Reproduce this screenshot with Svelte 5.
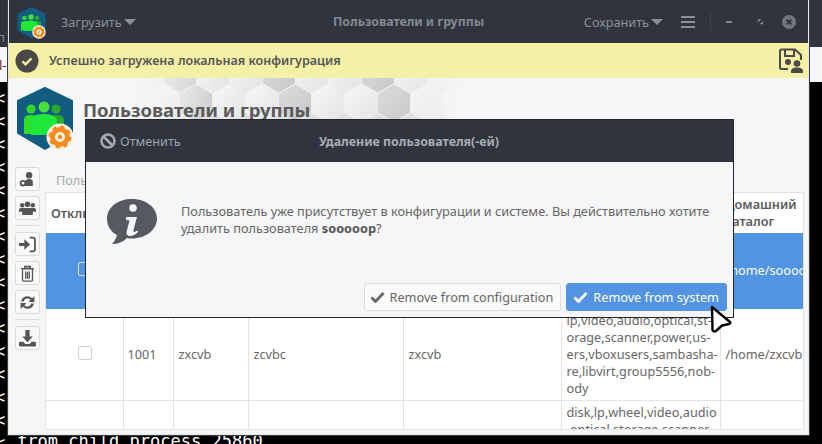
<script>
  const rows = [
    { uid: '1000', login: 'soooooр', name: 'soooooр', shell: 'soooooр', groups: '', home: '/home/sooooooр', cls: 'sel' },
    { uid: '1001', login: 'zxcvb', name: 'zcvbc', shell: 'zxcvb', groups: ['lp,video,audio,optical,st-','orage,scanner,power,us-','ers,vboxusers,sambasha-','re,libvirt,group5556,nob-','ody'], home: '/home/zxcvb', cls: '' },
    { uid: '', login: '', name: '', shell: '', groups: ['disk,lp,wheel,video,audio',',optical,storage,scanner'], home: '', cls: 'last' }
  ];
  const lines = Array.from({ length: 16 });
  const hexes = [];
  for (let i = 0; i < 11; i++) {
    hexes.push({ x: 148 + i * 33 - 131, y: -4, f: i % 3 === 1 ? 'hxd' : 'hx' });
    hexes.push({ x: 131 + i * 33 - 131, y: 25, f: i % 3 === 2 ? 'hxd' : 'hx' });
  }
</script>

{#snippet logo()}
  <svg class="logo" viewBox="0 0 58 64">
    <path d="M29 1 L56 14 V46 L29 62 L2 46 V14 Z" fill="#125c82" stroke="#125c82" stroke-width="2" stroke-linejoin="round"/>
    <circle cx="15" cy="22" r="4.600" fill="#35d52e"/>
    <circle cx="40" cy="22" r="4.600" fill="#2aa92e"/>
    <path d="M8 47 V33 Q8 28 15 28 Q22 28 22 33 V47 Z" fill="#2fe02a"/>
    <path d="M34 47 V33 Q34 28 41 28 Q48 28 48 33 V47 Z" fill="#2aa92e"/>
    <circle cx="28" cy="20" r="5.500" fill="#45e03a"/>
    <path d="M15 48 V35 Q15 27 28 27 Q41 27 41 35 V48 Z" fill="#1fe83a"/>
    <circle cx="44" cy="50" r="13.500" fill="#fdf3e4"/>
    <circle cx="44" cy="50" r="7.500" fill="none" stroke="#f58a1f" stroke-width="5"/>
    <circle cx="44" cy="50" r="9.800" fill="none" stroke="#f58a1f" stroke-width="3.400" stroke-dasharray="3.850 3.850"/>
    <circle cx="44" cy="50" r="2.200" fill="#f58a1f"/>
  </svg>
{/snippet}

<div class="desktop">
  <div class="term">
    {#each lines as _}<div>&lt;</div>{/each}
  </div>
  <div class="termlast">from child process 25860</div>
  <div class="backwin left"><span class="bt">п</span><span class="bw">l-</span></div>
  <div class="backwin right"></div>

  <div class="window">
    <header class="titlebar">
      <div class="tlogo">{@render logo()}</div>
      <span class="menu load">Загрузить<i class="caret"></i></span>
      <strong class="wtitle">Пользователи и группы</strong>
      <span class="menu save">Сохранить<i class="caret"></i></span>
      <span class="burger"><i></i><i></i><i></i></span>
      <span class="vsep"></span>
      <span class="min"></span>
      <svg class="rest" viewBox="0 0 8 8"><path d="M1 1h4L1 5zM7 7H3l4-4z" fill="#7f838c"/></svg>
      <svg class="close" viewBox="0 0 14 14"><circle cx="7" cy="7" r="7" fill="#71757e"/><path d="M4.600 4.600l4.800 4.800M9.400 4.600l-4.800 4.800" stroke="#2f343f" stroke-width="2"/></svg>
    </header>

    <div class="notice">
      <svg class="okic" viewBox="0 0 24 24"><circle cx="12" cy="12" r="11.500" fill="#4a4947"/><path d="M7.500 12.300l3 3 6-6" fill="none" stroke="#f4f1a6" stroke-width="2.400"/></svg>
      <b>Успешно загружена локальная конфигурация</b>
      <svg class="saveic" viewBox="0 0 26 26">
        <path d="M2 9V3a1.500 1.500 0 0 1 1.500-1.500H17L23 7v5M10 21H3.500A1.500 1.500 0 0 1 2 19.500V9" fill="none" stroke="#4a4a4a" stroke-width="2"/>
        <path d="M7 2v6h9V2" fill="none" stroke="#4a4a4a" stroke-width="2"/>
        <circle cx="10" cy="14" r="3" fill="#4a4a4a"/>
        <circle cx="19" cy="15.500" r="3.300" fill="#4a4a4a"/>
        <path d="M13 25v-2q0-3.500 6-3.500t6 3.500v2z" fill="#4a4a4a"/>
      </svg>
    </div>

    <main class="page">
      <svg class="hexbg" viewBox="0 0 340 44" width="340" height="44">
        <defs>
          <linearGradient id="fade" x1="0" x2="1">
            <stop offset="0" stop-color="#f5f6f7"/><stop offset=".1" stop-color="#f5f6f7" stop-opacity=".6"/>
            <stop offset=".26" stop-color="#f5f6f7" stop-opacity="0"/><stop offset=".82" stop-color="#f5f6f7" stop-opacity="0"/>
            <stop offset=".95" stop-color="#f5f6f7" stop-opacity=".8"/><stop offset=".98" stop-color="#f5f6f7"/>
          </linearGradient>
          <linearGradient id="hx" x1="0" y1="0" x2="1" y2="1"><stop offset="0" stop-color="#f8f8f8"/><stop offset="1" stop-color="#e2e2e2"/></linearGradient>
          <linearGradient id="hxd" x1="0" y1="0" x2="1" y2="1"><stop offset="0" stop-color="#dcdcdc"/><stop offset="1" stop-color="#c8c8c8"/></linearGradient>
        </defs>
        <rect width="340" height="44" fill="#e0e0e0"/>
        {#each hexes as h}
          <path transform={`translate(${h.x} ${h.y})`} d="M0 -19 L16.500 -9.500 V9.500 L0 19 L-16.500 9.500 V-9.500 Z" fill={`url(#${h.f})`} stroke="#efefef" stroke-width="1"/>
        {/each}
        <rect width="340" height="44" fill="url(#fade)"/>
      </svg>
      <div class="hero">
        <div class="hlogo">{@render logo()}</div>
        <h1>Пользователи и группы</h1>
      </div>
      <div class="body">
        <nav class="tools">
          <button aria-label="a"><svg viewBox="0 0 16 16"><circle cx="9.500" cy="4" r="3" fill="#555"/><path d="M6 14V10q0-2.500 3.500-2.500T13 10v4z" fill="#555"/><circle cx="3.800" cy="11.500" r="2.200" fill="none" stroke="#555" stroke-width="1.800"/></svg></button>
          <button aria-label="b"><svg viewBox="0 0 16 16"><circle cx="3" cy="5" r="2.100" fill="#555"/><circle cx="13" cy="5" r="2.100" fill="#555"/><circle cx="8" cy="4" r="2.600" fill="#555"/><path d="M0 11V9q0-1.500 2-1.500h12q2 0 2 1.500v2zM3 14v-4q0-2 2-2h6q2 0 2 2v4z" fill="#555"/></svg></button>
          <hr />
          <button aria-label="c"><svg viewBox="0 0 16 16"><path d="M0 6.500h5V3l5.500 5L5 13V9.500H0z" fill="#555"/><path d="M10 1.500h3a2 2 0 0 1 2 2v9a2 2 0 0 1-2 2h-3" fill="none" stroke="#555" stroke-width="1.700"/></svg></button>
          <button aria-label="d"><svg viewBox="0 0 16 16"><path d="M2 3.500h12M5.500 3V1.500h5V3" fill="none" stroke="#555" stroke-width="1.500"/><path d="M3.300 4v10a1.200 1.200 0 0 0 1.200 1.200h7A1.200 1.200 0 0 0 12.700 14V4M6.300 6v7M8 6v7M9.700 6v7" fill="none" stroke="#555" stroke-width="1.200"/></svg></button>
          <button aria-label="e"><svg viewBox="0 0 16 16"><path d="M2 7a6 6 0 0 1 10.300-3L14.500 2v5.500H9l2-2a4 4 0 0 0-6.700 1.500zM14 9a6 6 0 0 1-10.300 3L1.500 14V8.500H7l-2 2a4 4 0 0 0 6.700-1.500z" fill="#555"/></svg></button>
          <hr />
          <button aria-label="f"><svg viewBox="0 0 16 16"><path d="M6 0h4v6h3L8 11.500 3 6h3z" fill="#555"/><path d="M1 11h3l2 2.200h4L12 11h3q1 0 1 1v2.500q0 1-1 1H1q-1 0-1-1V12q0-1 1-1z" fill="#555"/></svg></button>
        </nav>
        <section class="content">
          <div class="tab">Пользователи</div>
          <div class="tablewrap">
            <table>
              <colgroup><col style="width:77px"/><col style="width:50px"/><col style="width:75px"/><col style="width:155px"/><col style="width:158px"/><col style="width:159px"/><col style="width:84px"/></colgroup>
              <thead>
                <tr><th>Отключить</th><th>UID</th><th>Логин</th><th>Имя</th><th>Группа</th><th>Группы</th><th>Домашний каталог</th></tr>
              </thead>
              <tbody>
                {#each rows as r}
                  <tr class={r.cls}>
                    <td class="chk">{#if r.cls !== 'last'}<span class="box"></span>{/if}</td>
                    <td>{r.uid}</td><td>{r.login}</td><td>{r.name}</td><td>{r.shell}</td>
                    <td class="grp">{#if r.groups}{#each r.groups as g}<div>{g}</div>{/each}{/if}</td>
                    <td class="home">{r.home}</td>
                  </tr>
                {/each}
              </tbody>
            </table>
          </div>
        </section>
      </div>
    </main>
  </div>

  <div class="dialog">
    <div class="dhead">
      <span class="cancel">
        <svg viewBox="0 0 16 16"><circle cx="8" cy="8" r="6.500" fill="none" stroke="#a5a8ae" stroke-width="2.600"/><path d="M3.500 3.500l9 9" stroke="#a5a8ae" stroke-width="2.600"/></svg>
        Отменить
      </span>
      <strong>Удаление пользователя(-ей)</strong>
    </div>
    <div class="dbody">
      <svg class="info" viewBox="0 0 50 46">
        <path d="M25 0C11 0 0 8 0 20c0 7 4 13 10 16-1 4-3 7-5 9 6 0 11-2 15-6 2 .5 3 .6 5 .6 14 0 25-9 25-20S39 0 25 0z" fill="#565a60"/>
        <circle cx="26" cy="9" r="3.800" fill="#f5f6f7"/>
        <path d="M19 18h11l-3.500 13q-.5 2 1 2l3-1.500.5 1.500q-4 4-8 4t-3.500-4l3-11.500-3.500-.5z" fill="#f5f6f7"/>
      </svg>
      <p>Пользователь уже присутствует в конфигурации и системе. Вы действительно хотите удалить пользователя <b>soooooр</b>?</p>
    </div>
    <div class="dfoot">
      <button class="btn"><svg viewBox="0 0 14 12"><path d="M1 6.500l4 4L13 2" fill="none" stroke="currentColor" stroke-width="2.800"/></svg>Remove from configuration</button>
      <button class="btn primary"><svg viewBox="0 0 14 12"><path d="M1 6.500l4 4L13 2" fill="none" stroke="currentColor" stroke-width="2.800"/></svg>Remove from system</button>
    </div>
  </div>

  <svg class="cursor" viewBox="0 0 24 28" width="24" height="28">
    <path d="M3 2 L21 17 Q22 18.500 20 19 L13 20.500 L7 26 Q4 27 3.500 25 Z" fill="#fff" stroke="#000" stroke-width="2.400" stroke-linejoin="round"/>
  </svg>
</div>

<style>
  :global(body) { margin: 0; background: #000; }
  .desktop {
    position: relative; width: 822px; height: 444px; overflow: hidden; background: #000;
    font-family: "Noto Sans", "Open Sans", sans-serif; color: #5c616c;
  }
  .term { position: absolute; left: -5px; top: 87px; font: 17px/23px "DejaVu Sans Mono", monospace; color: #fff; }
  .termlast { position: absolute; left: 17px; top: 431px; font: 17px/20px "DejaVu Sans Mono", monospace; color: #fff; }
  .backwin { position: absolute; top: 0; height: 82px; width: 12px; overflow: hidden;
    background: linear-gradient(#2f343f 0 47px, #f5f6f7 47px 82px); }
  .backwin.left { left: 0; width: 8px; }
  .backwin.right { right: 0; }
  .bt { position: absolute; left: -3px; top: 28px; font-size: 13px; color: #888; }
  .bw { position: absolute; left: -1px; top: 56px; font-size: 13px; color: #7d1a3a; }

  .window {
    position: absolute; left: 7px; top: -1px; width: 803px; height: 437px; box-sizing: border-box;
    border: 1px solid #3a3d44; outline: 1px solid #e6e7e9; outline-offset: -2px;
    padding: 1px; display: flex; flex-direction: column; background: #f5f6f7;
  }
  .titlebar {
    height: 43px; flex: none; background: #2f343f; display: flex; align-items: center; position: relative;
    margin-top: -1px; color: #8b8f97;
  }
  .tlogo { width: 29px; height: 32px; margin-left: 8px; margin-top: 2px; }
  .hlogo { width: 58px; height: 64px; margin: 9px 0 0 7px; }
  .logo { display: block; width: 100%; height: 100%; }
  .menu { font-size: 12.700px; display: inline-flex; align-items: center; }
  .load { margin-left: 15px; }
  .caret { display: inline-block; margin-left: 2px; border: 6px solid transparent; border-top: 6px solid #8b8f97; border-bottom: 0; border-left-width: 6.500px; border-right-width: 6.500px; }
  .wtitle { position: absolute; left: 324px; font-size: 12.300px; font-weight: 700; color: #85898f; }
  .save { margin-left: auto; }
  .burger { margin-left: 18px; width: 14px; display: flex; flex-direction: column; gap: 3px; }
  .burger i { height: 2px; background: #8b8f97; display: block; }
  .vsep { width: 1px; height: 18px; background: #3f4450; margin-left: 15px; }
  .min { width: 6px; height: 2px; background: #7f838c; margin-left: 15px; }
  .rest { width: 7px; height: 7px; margin-left: 25px; }
  .close { width: 14px; height: 14px; margin-left: 18px; margin-right: 12px; }

  .notice {
    height: 35px; flex: none; background: #f4f1a6; display: flex; align-items: center; padding-left: 6px;
    font-size: 12.550px; color: #555;
  }
  .notice b { margin-left: 10px; font-weight: 600; }
  .okic { width: 24px; height: 24px; }
  .saveic { width: 26px; height: 26px; margin-left: auto; margin-right: 4px; }

  .page { flex: 1; min-height: 0; position: relative; overflow: hidden; }
  .hexbg { position: absolute; left: 121px; top: 0; }
  .hero { position: relative; height: 89px; display: flex; }
  .hero h1 { margin: 19px 0 0 9px; font-size: 18.500px; line-height: 26px; font-weight: 700; color: #5a5a5a; }
  .body { display: flex; height: 268px; }
  .tools { width: 25px; margin-left: 6px; display: flex; flex-direction: column; gap: 5px; }
  .tools button {
    width: 25px; height: 24px; box-sizing: border-box; padding: 0; background: #f9f9fa; border: 1px solid #d8dade; border-radius: 3px;
    display: flex; align-items: center; justify-content: center;
  }
  .tools svg { width: 17px; height: 17px; }
  .tools hr { width: 24px; margin: 0; border: 0; border-top: 1px solid #dcdde0; height: 1px; }
  .content { margin-left: 5px; width: 759px; }
  .tab { height: 25px; line-height: 26px; padding-left: 11px; font-size: 12.700px; color: #aaa; }
  .tablewrap { height: 238px; overflow: hidden; background: #fff; border: 1px solid #e3e4e6; box-sizing: border-box; }
  table { table-layout: fixed; width: 758px; border-collapse: collapse; font-size: 12.700px; line-height: 17px; color: #666; }
  th { height: 40px; padding: 0 5px; text-align: left; font-weight: 600; color: #5a5a5a; vertical-align: middle; overflow: hidden; }
  td { border-left: 1px solid #e3e4e6; border-bottom: 1px solid #e3e4e6; padding: 3px 4px 3px 5px; vertical-align: middle; }
  td:nth-child(2) { padding-left: 4px; }
  tr td:first-child { border-left: 0; padding-left: 6px; padding-right: 4px; }
  tr.sel td { height: 69px; background: #5294e2; color: #fff; border-color: #5294e2; }
  .grp { white-space: nowrap; overflow: hidden; }
  tr.last td { vertical-align: top; padding-top: 3px; }
  .home { white-space: nowrap; overflow: hidden; }
  .chk { text-align: center; }
  .box { display: inline-block; width: 12px; height: 12px; border: 1px solid #cfd1d4; border-radius: 2px; background: #fff; vertical-align: top; }
  .sel .box { background: transparent; border-color: #cfe0f5; }

  .dialog {
    position: absolute; left: 85px; top: 119px; width: 649px; height: 199px; box-sizing: border-box;
    border: 1px solid #23262c; background: #f5f6f7; display: flex; flex-direction: column;
  }
  .dhead { height: 42px; flex: none; background: #2f343f; position: relative; display: flex; align-items: center; color: #a0a3a9; font-size: 12.700px; }
  .cancel { display: inline-flex; align-items: center; gap: 4px; margin-left: 14px; }
  .cancel svg { width: 16px; height: 16px; }
  .dhead strong { position: absolute; left: 233px; font-size: 12.400px; color: #a9acb2; font-weight: 700; }
  .dbody { flex: 1; display: flex; align-items: flex-start; min-height: 0; }
  .info { width: 50px; height: 46px; margin: 37px 0 0 21px; flex: none; }
  .dbody p { margin: 41px 0 0 24px; width: 540px; font-size: 12.740px; line-height: 17px; color: #666; }
  .dbody p b { font-weight: 700; color: #555; }
  .dfoot { position: absolute; right: 6px; bottom: 6px; display: flex; gap: 5px; }
  .btn {
    height: 28px; box-sizing: border-box; border: 1px solid #dcdde0; border-radius: 3px; background: #fafafb; color: #666;
    font: 12.700px "Noto Sans", sans-serif; display: inline-flex; align-items: center; gap: 5px; padding: 0 7px 0 5px;
  }
  .btn svg { width: 15px; height: 12px; }
  .btn.primary { background: #5294e2; border-color: #5294e2; color: #fff; padding-left: 6px; }
  .cursor { position: absolute; left: 709px; top: 305px; }
</style>
